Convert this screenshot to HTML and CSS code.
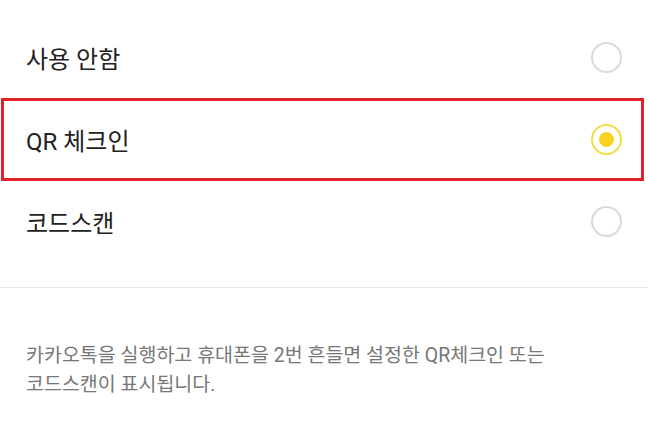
FILE: index.html
```html
<!DOCTYPE html>
<html lang="ko">
<head>
  <meta charset="UTF-8">
  <title>흔들기 설정</title>
  <link rel="stylesheet" href="styles.css">
</head>
<body>
  <div class="option-list">
    <div class="option">
      <span class="option-label">사용 안함</span>
      <span class="radio"></span>
    </div>
    <div class="option selected">
      <span class="option-label">QR 체크인</span>
      <span class="radio checked"></span>
    </div>
    <div class="option last">
      <span class="option-label">코드스캔</span>
      <span class="radio"></span>
    </div>
  </div>

  <p class="desc">카카오톡을 실행하고 휴대폰을 2번 흔들면 설정한 QR체크인 또는<br>코드스캔이 표시됩니다.</p>
</body>
</html>
```

FILE: styles.css
```css
body {
  margin: 0;
  background: #fff;
  font-family: Roboto, "Noto Sans CJK KR", sans-serif;
  color: #222;
}
.option-list {
  padding: 16px 0 26px;
  border-bottom: 1px solid #e6e6e6;
}
.option {
  height: 82px;
  display: flex;
  align-items: center;
  justify-content: space-between;
  padding: 0 26px;
}
.option.selected {
  box-sizing: border-box;
  height: 83px;
  margin: 0 4px 0 1px;
  padding: 0 19px 0 22px;
  border: 3px solid #e3212b;
}
.option.last {
  height: 80px;
}
.option-label {
  font-size: 24px;
}
.radio {
  box-sizing: border-box;
  width: 31px;
  height: 31px;
  border: 2px solid #dadada;
  border-radius: 50%;
  display: flex;
  align-items: center;
  justify-content: center;
}
.radio.checked {
  border-color: #f3dc45;
}
.radio.checked::after {
  content: "";
  width: 15px;
  height: 15px;
  border-radius: 50%;
  background: #f6d31a;
}
.desc {
  margin: 0;
  padding: 53px 26px 0;
  font-size: 19.5px;
  line-height: 29px;
  color: #777;
}
```
